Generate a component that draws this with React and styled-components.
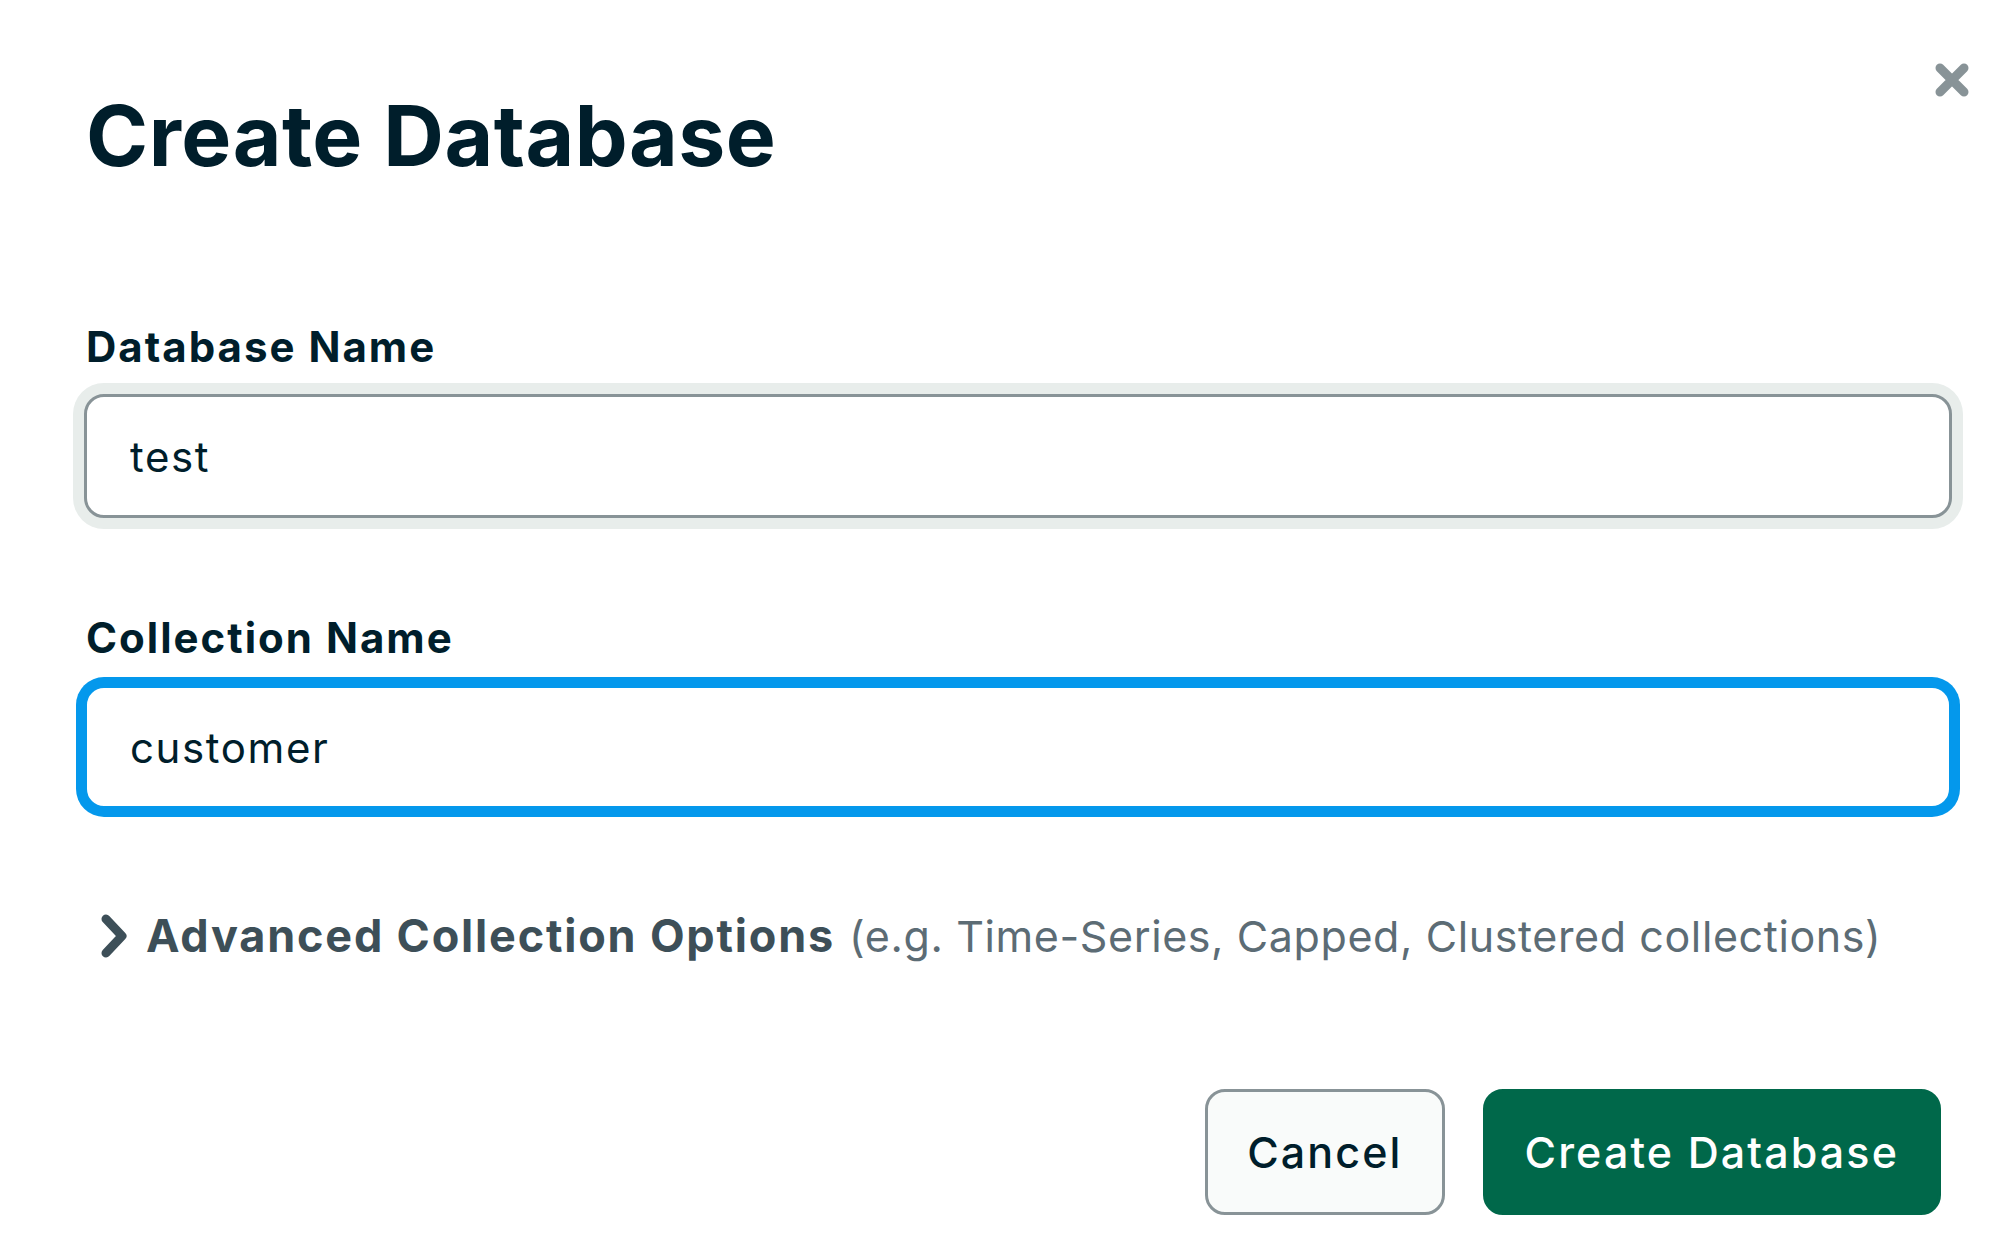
import React, {useState} from "react";
import styled, {createGlobalStyle} from "styled-components";

const GlobalStyle = createGlobalStyle`
  html, body {
    margin: 0;
    padding: 0;
    background: #ffffff;
  }
  body {
    font-family: Inter, "Noto Sans", sans-serif;
    color: #001e2b;
  }
`;

function App() {
  const [dbName, setDbName] = useState("test");
  const [collName, setCollName] = useState("customer");

  return (
    <>
      <GlobalStyle/>
      <Modal>
        <CloseButton aria-label="Close">
          <svg width="36" height="36" viewBox="0 0 36 36">
            <path d="M6 6 L30 30 M30 6 L6 30" stroke="#889397" strokeWidth="9" strokeLinecap="round"/>
          </svg>
        </CloseButton>
        <Title>Create Database</Title>

        <Field>
          <Label>Database Name</Label>
          <Input
            value={dbName}
            onChange={(e) => setDbName(e.target.value)}/>
        </Field>

        <Field $top={95}>
          <Label>Collection Name</Label>
          <Input
            $focused
            value={collName}
            onChange={(e) => setCollName(e.target.value)}/>
        </Field>

        <Advanced>
          <svg width="32" height="46" viewBox="0 0 32 46">
            <path d="M8 6 L24 23 L8 40" fill="none" stroke="#3d4f58" strokeWidth="9" strokeLinecap="round" strokeLinejoin="round"/>
          </svg>
          <AdvancedTitle>Advanced Collection Options</AdvancedTitle>
          <AdvancedHint>(e.g. Time-Series, Capped, Clustered collections)</AdvancedHint>
        </Advanced>

        <Footer>
          <Button>Cancel</Button>
          <Button $primary>Create Database</Button>
        </Footer>
      </Modal>
    </>
  );
}

const Modal = styled.div`
    position: relative;
    width: 2000px;
    height: 1254px;
    box-sizing: border-box;
    padding: 86px 48px 0 84px;
`;
const CloseButton = styled.button`
    position: absolute;
    top: 62px;
    left: 1934px;
    width: 36px;
    height: 36px;
    padding: 0;
    border: none;
    background: none;
    display: flex;
    cursor: pointer;
`;
const Title = styled.h1`
    margin: 0 0 0 2px;
    font-size: 84px;
    line-height: 100px;
    font-weight: 700;
    letter-spacing: 0.5px;
    color: #001e2b;
`;
const Field = styled.div`
    display: flex;
    flex-direction: column;
    margin-top: ${(p) => p.$top || 136}px;
`;
const Label = styled.label`
    margin-left: 2px;
    font-size: 42px;
    line-height: 50px;
    font-weight: 700;
    letter-spacing: 2px;
    color: #001e2b;
    margin-bottom: 22px;
`;
const Input = styled.input`
    box-sizing: border-box;
    width: 100%;
    height: 124px;
    padding: 0 43px;
    border: 3px solid ${(p) => (p.$focused ? "#0498ec" : "#889397")};
    border-radius: 20px;
    box-shadow: 0 0 0 ${(p) => (p.$focused ? "8px #0498ec" : "11px #e8edeb")};
    background: #ffffff;
    font-family: Inter, "Noto Sans", sans-serif;
    font-size: 42px;
    letter-spacing: 1.6px;
    color: #001e2b;
    outline: none;
`;
const Advanced = styled.div`
    display: flex;
    align-items: center;
    gap: 16px;
    margin: 99px 0 0 14px;
    white-space: nowrap;
`;
const AdvancedTitle = styled.span`
    font-size: 45px;
    font-weight: 700;
    letter-spacing: 1.8px;
    color: #3d4f58;
`;
const AdvancedHint = styled.span`
    margin-left: -2px;
    font-size: 43px;
    font-weight: 400;
    letter-spacing: 0.6px;
    color: #5c6c75;
`;
const Footer = styled.div`
    display: flex;
    justify-content: flex-end;
    gap: 38px;
    margin: 126px 11px 0 0;
`;
const Button = styled.button`
    box-sizing: border-box;
    height: 126px;
    padding: 0 39px;
    border-radius: 20px;
    border: 3px solid ${(p) => (p.$primary ? "#00684a" : "#889397")};
    background: ${(p) => (p.$primary ? "#00684a" : "#f9fbfa")};
    color: ${(p) => (p.$primary ? "#ffffff" : "#001e2b")};
    font-family: Inter, "Noto Sans", sans-serif;
    font-size: 43px;
    font-weight: 500;
    letter-spacing: 2.1px;
    cursor: pointer;
`;

export default App;
